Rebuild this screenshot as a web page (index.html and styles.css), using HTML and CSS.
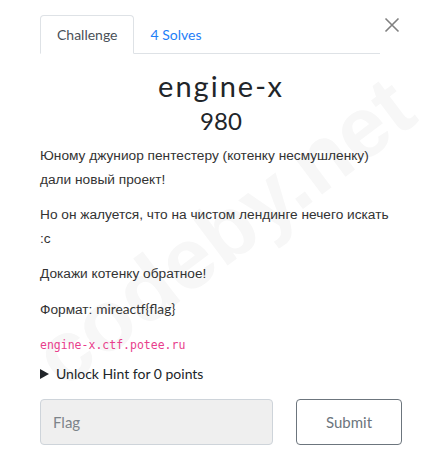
FILE: index.html
```html
<!DOCTYPE html>
<html lang="ru">
<head>
<meta charset="utf-8">
<title>engine-x</title>
<link rel="stylesheet" href="styles.css">
</head>
<body>
<div class="modal">
  <div class="watermark">codeby.net</div>
  <div class="header">
    <ul class="tabs">
      <li class="tab active">Challenge</li>
      <li class="tab link">4 Solves</li>
    </ul>
    <button class="close" aria-label="Close">
      <svg width="16" height="16" viewBox="0 0 16 16"><path d="M1.5 1.5 L14.5 14.5 M14.5 1.5 L1.5 14.5" stroke="#808080" stroke-width="1.6" fill="none"/></svg>
    </button>
  </div>
  <h2 class="title">engine-x</h2>
  <h3 class="value">980</h3>
  <div class="desc">
    <p>Юному джуниор пентестеру (котенку несмушленку) дали новый проект!</p>
    <p>Но он жалуется, что на чистом лендинге нечего искать :c</p>
    <p>Докажи котенку обратное!</p>
    <p>Формат: <span class="lat">mireactf{flag}</span></p>
    <p><code>engine-x.ctf.potee.ru</code></p>
  </div>
  <div class="hint"><span class="tri"></span>Unlock Hint for 0 points</div>
  <div class="form">
    <input class="flag" type="text" placeholder="Flag">
    <button class="submit">Submit</button>
  </div>
</div>
</body>
</html>
```
FILE: styles.css
```css
html, body {
  margin: 0;
  padding: 0;
  background: #fff;
}
body {
  font-family: Lato, "Liberation Sans", sans-serif;
  color: #212529;
}
.modal {
  position: relative;
  overflow: hidden;
  width: 442px;
  height: 461px;
  padding: 15px 40px 0 40px;
  box-sizing: border-box;
}
.watermark {
  position: absolute;
  left: 0;
  top: 182px;
  font-family: "Liberation Sans", sans-serif;
  font-weight: bold;
  font-size: 86px;
  color: #f7f7f7;
  transform: rotate(-37deg);
  transform-origin: center;
  white-space: nowrap;
  pointer-events: none;
  z-index: 0;
}
.header, .title, .value, .desc, .hint, .form {
  position: relative;
  z-index: 1;
}
.header {
  display: flex;
  align-items: flex-start;
}
.tabs {
  display: flex;
  list-style: none;
  margin: 0;
  padding: 0;
  width: 340px;
  border-bottom: 1px solid #dee2e6;
}
.tab {
  font-size: 14px;
  line-height: 20px;
  padding: 9px 15px 8px 16px;
  margin-bottom: -1px;
  border: 1px solid transparent;
  border-radius: 4px 4px 0 0;
}
.tab.active {
  color: #495057;
  border-color: #dee2e6 #dee2e6 #fff;
  background: #fff;
}
.tab.link {
  color: #1e7ef7;
}
.close {
  margin-top: 2px;
  padding: 0;
  border: 0;
  background: none;
  width: 16px;
  height: 16px;
  margin-left: 4px;
}
.close svg { display: block; }
.title {
  margin: 15px 0 0;
  text-align: center;
  font-weight: 400;
  font-size: 29px;
  letter-spacing: 2px;
  line-height: 34px;
}
.value {
  margin: 3px 0 0;
  text-align: center;
  font-weight: 400;
  font-size: 24px;
  line-height: 30px;
}
.desc {
  margin-top: 8px;
  font-family: "Liberation Sans", Arial, sans-serif;
  font-size: 13.7px;
  line-height: 24px;
  color: #333;
}
.desc p {
  margin: 0 0 11px;
}
.lat {
  font-family: Lato, sans-serif;
}
code {
  font-family: "DejaVu Sans Mono", monospace;
  font-size: 11.5px;
  color: #e83e8c;
}
.hint {
  display: flex;
  align-items: center;
  font-size: 14px;
  line-height: 20px;
  color: #212529;
  margin-top: -4px;
}
.tri {
  width: 0;
  height: 0;
  border-top: 5px solid transparent;
  border-bottom: 5px solid transparent;
  border-left: 9px solid #212529;
  margin-right: 7px;
}
.form {
  display: flex;
  gap: 23px;
  margin-top: 15px;
}
.flag {
  width: 233px;
  height: 46px;
  box-sizing: border-box;
  border: 1px solid #ced4da;
  border-radius: 4px;
  background: #efefef;
  padding: 0 12px;
  font-family: Lato, sans-serif;
  font-size: 15px;
  color: #495057;
}
.flag::placeholder { color: #7d848a; }
.submit {
  width: 106px;
  height: 46px;
  box-sizing: border-box;
  border: 1px solid #6c757d;
  border-radius: 4px;
  background: #fff;
  font-family: Lato, sans-serif;
  font-size: 15px;
  color: #6c757d;
}
```
